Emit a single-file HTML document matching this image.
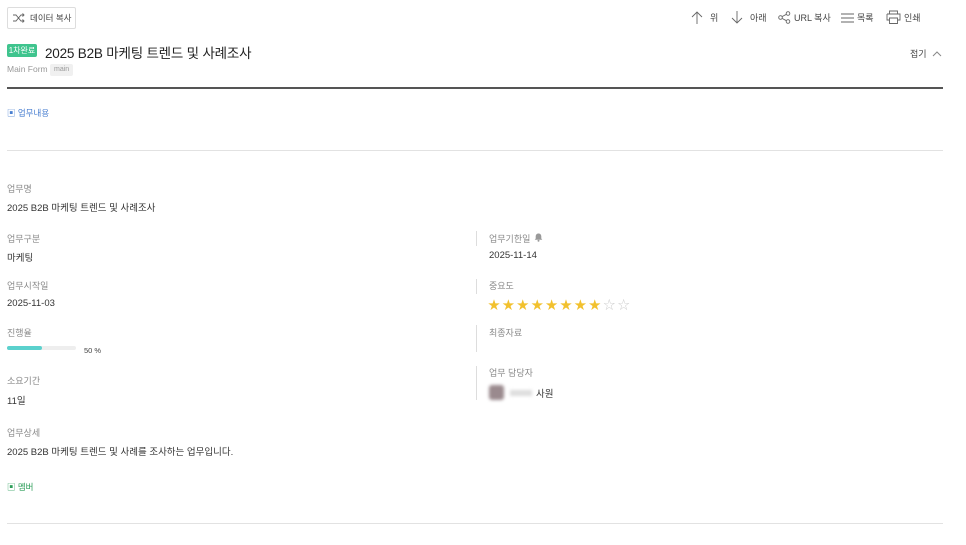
<!DOCTYPE html>
<html><head><meta charset="utf-8"><style>
*{margin:0;padding:0;box-sizing:border-box}
body{width:966px;height:545px;background:#fff;position:relative;overflow:hidden;font-family:"Liberation Sans","Noto Sans CJK KR",sans-serif;color:#333}
.a{position:absolute;white-space:nowrap}
.lb{font-size:9px;color:#8a8a8a}
.v{font-size:9.5px;color:#333}
.tb{font-size:9px;color:#444;display:flex;align-items:center;gap:3px}
.div{position:absolute;left:476px;width:1px;background:#ddd}
</style></head><body>
<div class="a" style="left:7px;top:7px;width:69px;height:22px;border:1px solid #ddd;border-radius:2px;display:flex;align-items:center;padding-left:5px;gap:5px;font-size:8.5px;color:#444">
<svg width="12" height="10" viewBox="0 0 12 10" fill="none" stroke="#666" stroke-width="0.9"><path d="M0 2h3l5 6h3M0 8h3l5-6h3M9.5 0.5l1.5 1.5-1.5 1.5M9.5 6.5l1.5 1.5-1.5 1.5"/></svg>데이터 복사</div>

<div class="a tb" style="left:691px;top:11px"><svg width="12" height="13" viewBox="0 0 12 13" fill="none" stroke="#666" stroke-width="0.9"><path d="M6 13V1M1 6l5-5 5 5"/></svg><span style="margin-left:4px">위</span></div>
<div class="a tb" style="left:731px;top:11px"><svg width="12" height="13" viewBox="0 0 12 13" fill="none" stroke="#666" stroke-width="0.9"><path d="M6 0v12M1 7l5 5 5-5"/></svg><span style="margin-left:4px">아래</span></div>
<div class="a tb" style="left:778px;top:11px"><svg width="13" height="13" viewBox="0 0 13 13" fill="none" stroke="#666" stroke-width="0.9"><circle cx="2.5" cy="6.5" r="1.8"/><circle cx="10" cy="2.5" r="1.8"/><circle cx="10" cy="10.5" r="1.8"/><path d="M4 5.6l4.4-2.3M4 7.4l4.4 2.3"/></svg><span>URL 복사</span></div>
<div class="a tb" style="left:841px;top:11px"><svg width="13" height="12" viewBox="0 0 13 12" fill="none" stroke="#666" stroke-width="0.9"><path d="M0 2h13M0 6h13M0 10h13"/></svg><span>목록</span></div>
<div class="a tb" style="left:886px;top:10px"><svg width="15" height="14" viewBox="0 0 15 14" fill="none" stroke="#666" stroke-width="0.9"><path d="M3.5 4V1h8v3M1 4h13v6h-2.5M3.5 10H1V4M3.5 8h8v5.5h-8z"/></svg><span>인쇄</span></div>
<div class="a" style="left:910px;top:47px;font-size:9px;color:#444">접기 <svg width="10" height="7" viewBox="0 0 10 7" fill="none" stroke="#888" style="margin-left:3px"><path d="M1 6l4-4 4 4"/></svg></div>

<div class="a" style="left:7px;top:44px;width:30px;height:13px;background:#3fc48e;color:#fff;font-size:8px;border-radius:2px;text-align:center;line-height:13px">1차완료</div>
<div class="a" style="left:45px;top:42px;font-size:13.5px;color:#222;font-weight:normal;letter-spacing:-0.2px">2025 B2B 마케팅 트렌드 및 사례조사</div>
<div class="a" style="left:7px;top:64px;font-size:8.5px;color:#999">Main Form</div>
<div class="a" style="left:50px;top:64px;height:12px;padding:0 4px;background:#f0f0f0;border-radius:2px;font-size:7px;color:#999;line-height:12px">main</div>
<div class="a" style="left:7px;top:87px;width:936px;height:1.5px;background:#555"></div>

<div class="a" style="left:7px;top:107px;font-size:8.5px;color:#4a7fd0">▣ 업무내용</div>
<div class="a" style="left:7px;top:150px;width:936px;height:1px;background:#e2e2e2"></div>

<div class="a lb" style="left:7px;top:182px">업무명</div>
<div class="a v" style="left:7px;top:200px">2025 B2B 마케팅 트렌드 및 사례조사</div>
<div class="a lb" style="left:7px;top:232px">업무구분</div>
<div class="a v" style="left:7px;top:250px">마케팅</div>
<div class="a lb" style="left:7px;top:279px">업무시작일</div>
<div class="a v" style="left:7px;top:298px">2025-11-03</div>
<div class="a lb" style="left:7px;top:326px">진행율</div>
<div class="a" style="left:7px;top:346px;width:69px;height:4px;background:#eee;border-radius:2px"><div style="width:35px;height:4px;background:#5bd1cd;border-radius:2px"></div></div>
<div class="a" style="left:84px;top:346px;font-size:7.5px;color:#444">50 %</div>
<div class="a lb" style="left:7px;top:374px">소요기간</div>
<div class="a v" style="left:7px;top:393px">11일</div>
<div class="a lb" style="left:7px;top:426px">업무상세</div>
<div class="a v" style="left:7px;top:444px">2025 B2B 마케팅 트렌드 및 사례를 조사하는 업무입니다.</div>
<div class="a" style="left:7px;top:481px;font-size:8.5px;color:#2e9e5a">▣ 멤버</div>
<div class="a" style="left:7px;top:523px;width:936px;height:1px;background:#e2e2e2"></div>

<div class="div" style="top:231px;height:15px"></div>
<div class="div" style="top:279px;height:15px"></div>
<div class="div" style="top:325px;height:27px"></div>
<div class="div" style="top:366px;height:34px"></div>
<div class="a lb" style="left:489px;top:232px">업무기한일</div>
<svg class="a" style="left:534px;top:233px" width="9" height="9" viewBox="0 0 9 9"><path d="M4.5 0.5c-1.8 0-2.8 1.3-2.8 3v2L0.7 6.8h7.6L7.3 5.5v-2c0-1.7-1-3-2.8-3z" fill="#999"/><circle cx="4.5" cy="7.8" r="1" fill="#999"/></svg>
<div class="a v" style="left:489px;top:250px">2025-11-14</div>
<div class="a lb" style="left:489px;top:279px">중요도</div>
<div class="a" style="left:488px;top:298px;font-size:12px;letter-spacing:2.4px;line-height:14px"><span style="color:#f2c12e">★★★★★★★★</span><span style="color:#ccc">☆☆</span></div>
<div class="a lb" style="left:489px;top:326px">최종자료</div>
<div class="a lb" style="left:489px;top:366px">업무 담당자</div>
<div class="a" style="left:489px;top:385px;width:15px;height:15px;background:#9a8a8e;border-radius:3px;filter:blur(1.5px)"></div>
<div class="a" style="left:510px;top:390px;width:22px;height:6px;background:#ddd;filter:blur(1.5px)"></div>
<div class="a v" style="left:536px;top:386px">사원</div>
</body></html>
